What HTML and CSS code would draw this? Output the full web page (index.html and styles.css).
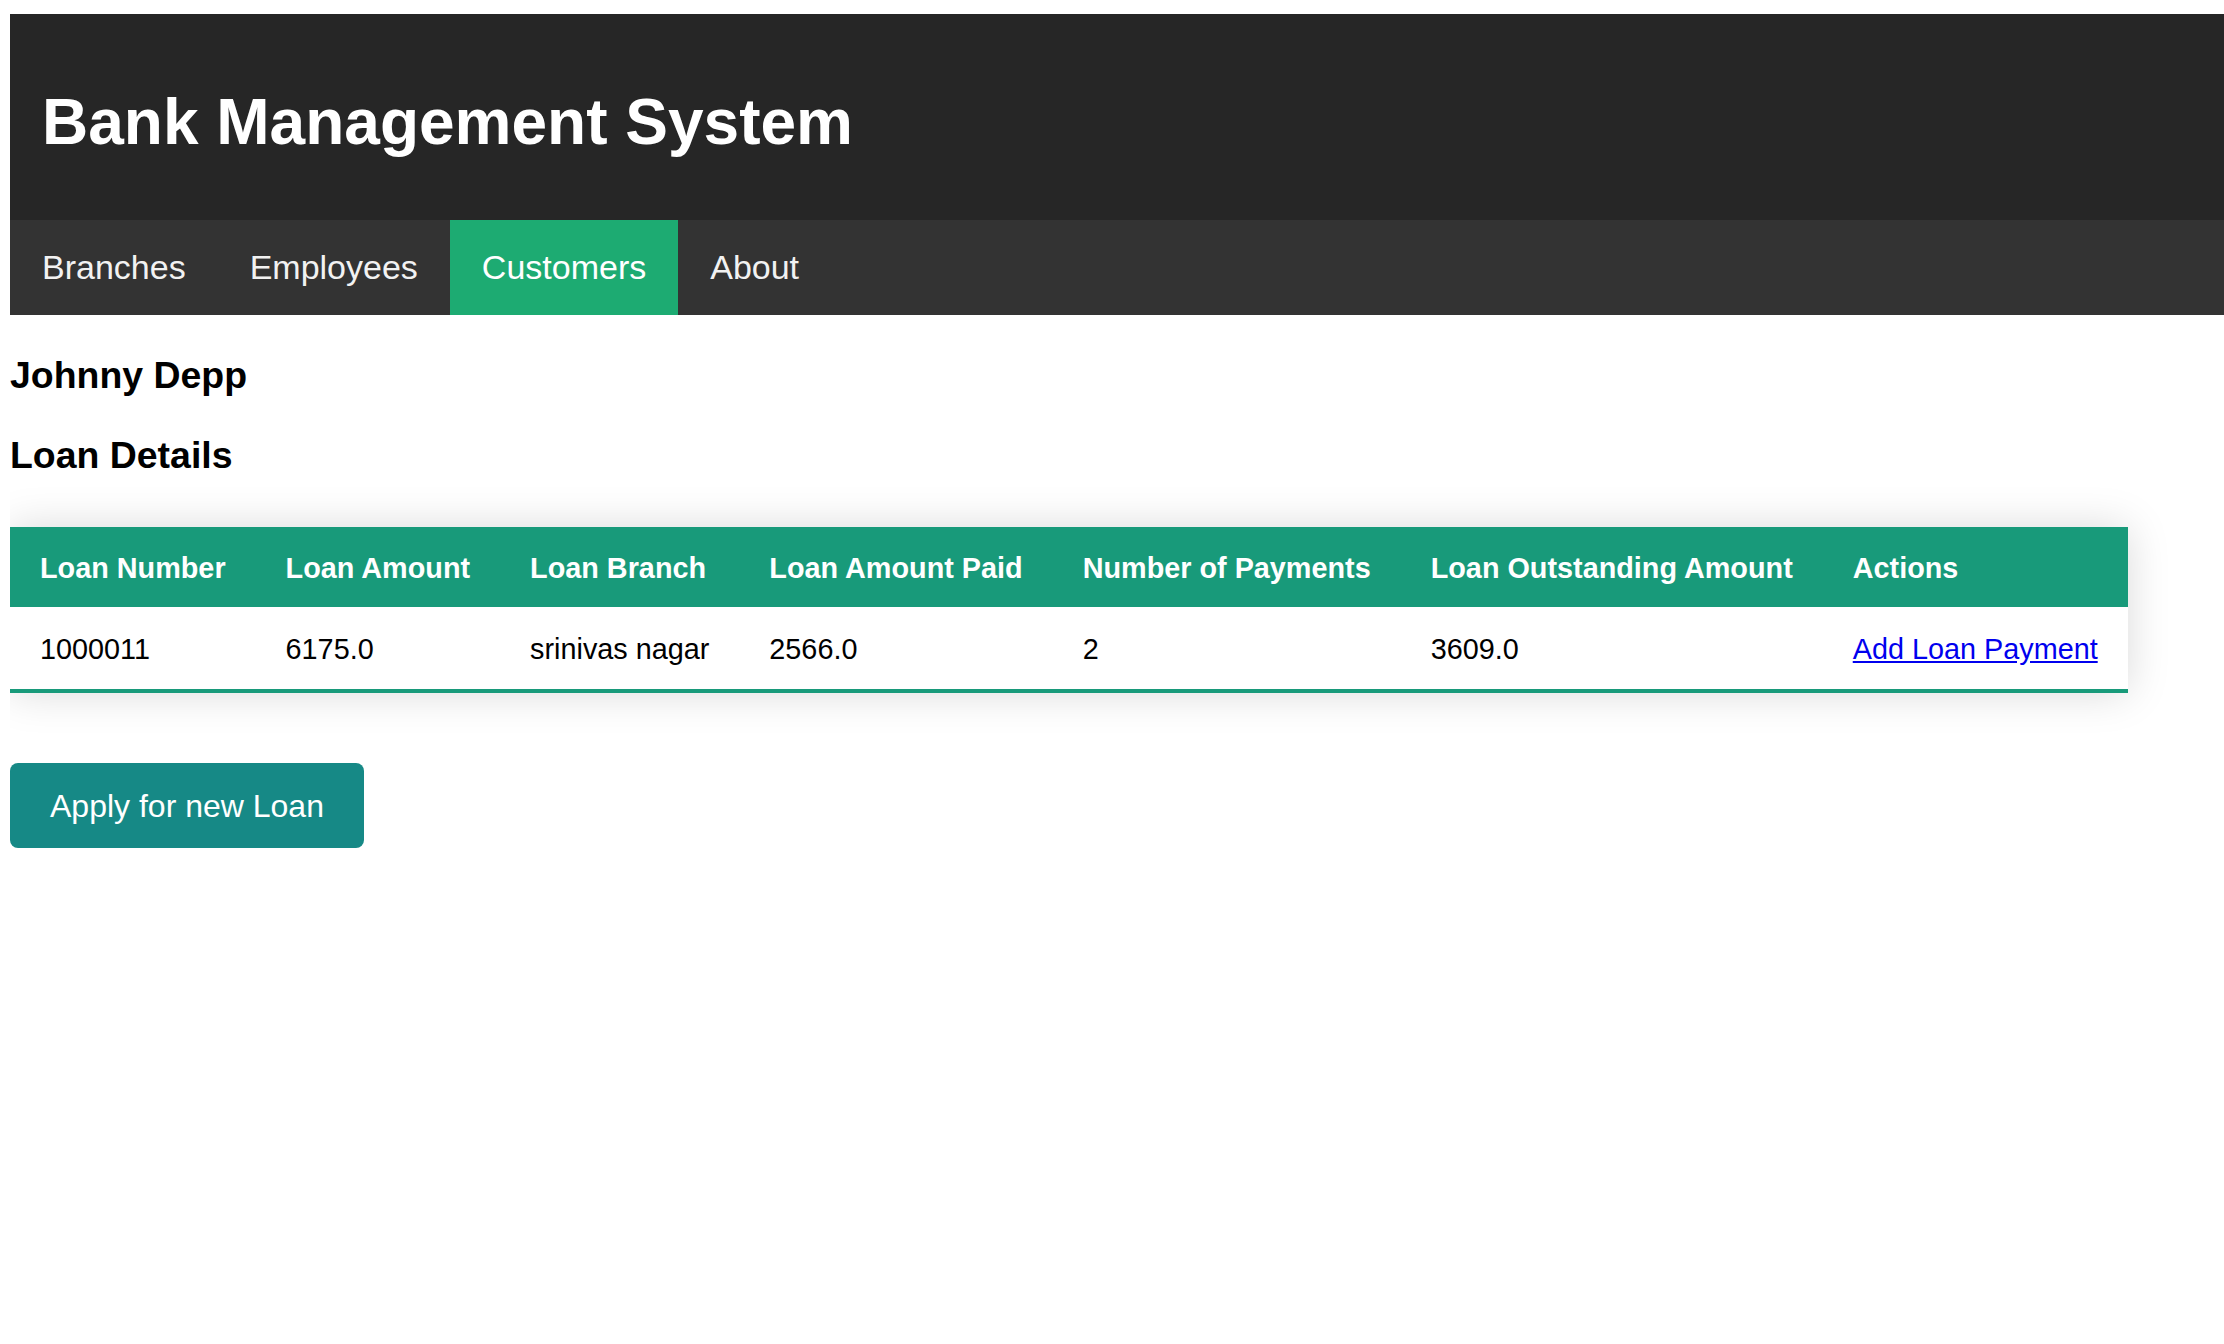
FILE: index.html
```html
<!DOCTYPE html>
<html lang="en">
<head>
<meta charset="utf-8">
<title>Bank Management System</title>
<link rel="stylesheet" href="styles.css">
</head>
<body>
<header class="site-header">
  <h1 class="site-title">Bank Management System</h1>
</header>
<nav class="main-nav">
  <a class="nav-item" href="#">Branches</a>
  <a class="nav-item" href="#">Employees</a>
  <a class="nav-item active" href="#">Customers</a>
  <a class="nav-item" href="#">About</a>
</nav>
<main class="content">
  <h3 class="section-title">Johnny Depp</h3>
  <h3 class="section-title">Loan Details</h3>
  <table class="loan-table">
    <thead>
      <tr>
        <th>Loan Number</th>
        <th>Loan Amount</th>
        <th>Loan Branch</th>
        <th>Loan Amount Paid</th>
        <th>Number of Payments</th>
        <th>Loan Outstanding Amount</th>
        <th>Actions</th>
      </tr>
    </thead>
    <tbody>
      <tr>
        <td>1000011</td>
        <td>6175.0</td>
        <td>srinivas nagar</td>
        <td>2566.0</td>
        <td>2</td>
        <td>3609.0</td>
        <td><a class="table-link" href="#">Add Loan Payment</a></td>
      </tr>
    </tbody>
  </table>
  <div class="actions">
    <a class="btn" href="#">Apply for new Loan</a>
  </div>
</main>
</body>
</html>
```
FILE: styles.css
```css
html, body {
  background: #ffffff;
}
body {
  margin: 14px 0 0 10px;
  font-family: "Liberation Sans", Arial, Helvetica, sans-serif;
  color: #000;
  overflow-x: hidden;
}
.site-header {
  background: #262626;
  padding: 72px 32px 62px;
}
.site-title {
  margin: 0;
  color: #ffffff;
  font-size: 64px;
  line-height: 72px;
  font-weight: bold;
}
.main-nav {
  display: flex;
  background: #333333;
}
.nav-item {
  display: block;
  padding: 28px 32px;
  font-size: 34px;
  line-height: 39px;
  color: #f2f2f2;
  text-decoration: none;
}
.nav-item.active {
  background: #1dab72;
  color: #ffffff;
}
.content {
  display: block;
  padding-top: 1.5px;
}
.section-title {
  font-size: 37.44px;
  margin: 37.44px 0;
  font-weight: bold;
}
.loan-table {
  border-collapse: collapse;
  margin-top: 49.5px;
  box-shadow: 0 0 40px rgba(0, 0, 0, 0.15);
  font-size: 28.8px;
  white-space: nowrap;
}
.loan-table th {
  background: #189a7a;
  color: #ffffff;
  text-align: left;
  font-weight: bold;
  padding: 25px 30px 23px;
  line-height: 32px;
}
.loan-table td {
  padding: 26px 30px 24px;
  line-height: 32px;
  background: #ffffff;
}
.loan-table tbody tr:last-of-type {
  border-bottom: 4px solid #189a7a;
}
.table-link {
  color: #0000ee;
  text-decoration: underline;
}
.actions {
  margin-top: 70px;
}
.btn {
  display: inline-block;
  background: #168986;
  color: #ffffff;
  font-size: 32px;
  line-height: 37px;
  padding: 25px 40px 23px;
  border-radius: 8px;
  text-decoration: none;
}
```
